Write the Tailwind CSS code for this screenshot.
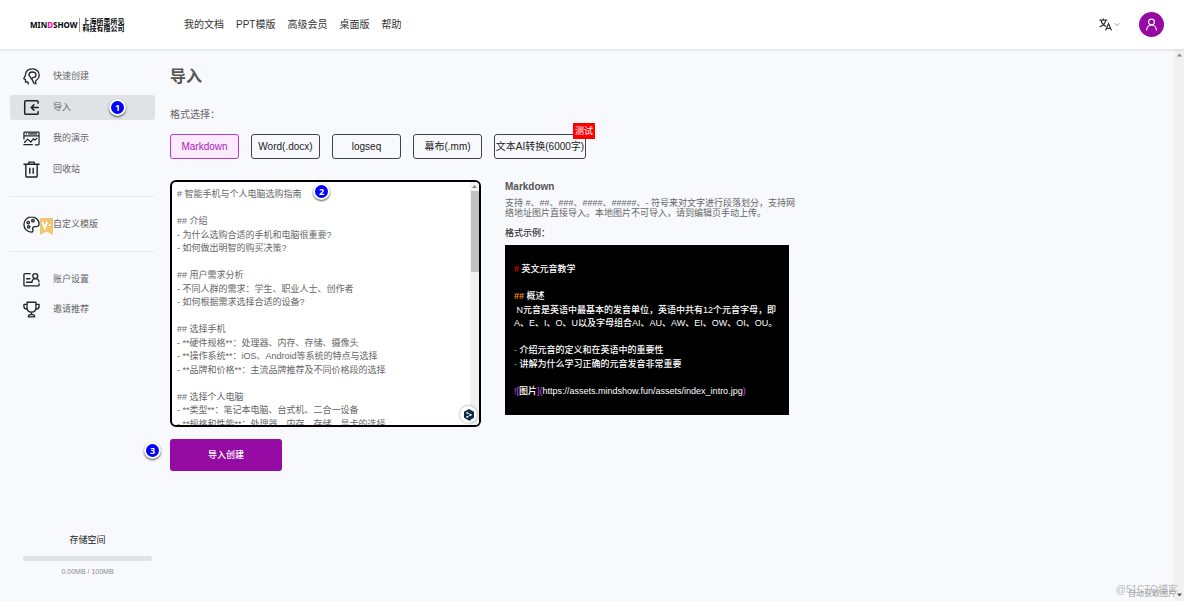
<!DOCTYPE html>
<html lang="zh-CN">
<head>
<meta charset="utf-8">
<meta name="viewport" content="width=device-width, initial-scale=1">
<title>MINDSHOW - 导入</title>
<script src="https://cdn.jsdelivr.net/npm/@tailwindcss/browser@4"></script>
</head>
<body class="relative flex min-h-screen flex-col overflow-x-hidden bg-[#f8f9fd] font-['Liberation_Sans','Noto_Sans_CJK_SC',sans-serif] text-[9px] text-[#666]">

<header class="z-10 flex h-[49px] shrink-0 items-center bg-white pr-5 pl-[30px] shadow-[0_1px_3px_rgba(0,0,0,0.12)]">
  <a href="#" class="flex w-[154px] items-center text-black">
    <span class="font-['Noto_Sans',sans-serif] text-[8px] leading-none font-bold">MIN<span class="text-[#f0a]">D</span>SHOW</span>
    <span class="mr-[3px] ml-px h-[14px] w-px bg-[#999]"></span>
    <span class="text-[7px] leading-[7px] font-bold whitespace-nowrap">上海所思所见<br>科技有限公司</span>
  </a>
  <nav class="flex flex-1 gap-3 text-[10px] whitespace-nowrap text-[#333]">
    <a href="#">我的文档</a>
    <a href="#">PPT模版</a>
    <a href="#">高级会员</a>
    <a href="#">桌面版</a>
    <a href="#">帮助</a>
  </nav>
  <button type="button" aria-label="切换语言" class="mr-[19px] flex items-center gap-[2px]">
    <svg class="h-[13px] w-[13px]" viewBox="0 0 13 13" fill="none" stroke="#333" stroke-width="1.2">
      <path d="M.5 2.200h7.800M4.300.4v1.800M2 2.400c.6 2.700 2.800 5 5 6M6.800 2.400C6.100 5.500 3.500 8 .6 8.800"/>
      <path d="M6.500 12.500l3-7 3 7M7.500 10.400h4"/>
    </svg>
    <svg class="h-[5px] w-[6px]" viewBox="0 0 6 5" fill="none" stroke="#888" stroke-width=".8"><path d="M.6 1.200L3 3.800l2.400-2.600"/></svg>
  </button>
  <button type="button" aria-label="个人账户" class="flex size-[25px] items-center justify-center rounded-full bg-[#940aa2]">
    <svg class="size-[13px]" viewBox="0 0 13 13" fill="none" stroke="#fff" stroke-width="1.100"><circle cx="6.500" cy="4" r="2.900"/><path d="M1.600 12.400c0-3.300 2.200-5.400 4.900-5.400s4.900 2.100 4.900 5.400"/></svg>
  </button>
</header>

<div class="flex flex-1">
  <aside class="flex w-[165px] shrink-0 flex-col pt-[15px] pr-[10px] pb-[23px] pl-[10px]">
    <nav class="flex flex-col">
      <div class="flex flex-col gap-[6px]">
        <a href="#" class="flex h-[25px] items-center gap-[13px] rounded-[3px] pl-[13px]">
          <svg class="size-[17px]" viewBox="0 0 18 18" fill="none" stroke="#222" stroke-width="1.400" stroke-linecap="round" stroke-linejoin="round">
            <path d="M5.500 16.800c.1-1.400-.2-2-1.200-2H2.600v-2.600L.8 11.400 2.400 8.200C2.600 3.500 5.800 1 10 1c4.300 0 7.200 3 7.200 6.700 0 2.300-1.200 3.900-3.100 5.200-1 .8-1.100 2.200-.3 4"/>
            <path d="M6.300 7.500c0-2.200 1.500-3.300 3.600-3.300 2.400 0 3.800 1.200 3.800 3.200 0 1.500-1 2.500-2.400 2.600-1.400 0-1.300 1.400-2.200 1.400-1 0-.7-1.700-1.400-2.100-.8-.4-1.400-.8-1.400-1.800zM9.500 12l2.300 4.500"/>
          </svg>
          <span class="pt-px">快速创建</span>
        </a>
        <a href="#" aria-current="page" class="relative flex h-[25px] items-center gap-[13px] rounded-[3px] bg-[#dfe3e6] pl-[13px]">
          <svg class="size-[17px]" viewBox="0 0 18 18" fill="none" stroke="#222" stroke-width="1.600" stroke-linecap="round" stroke-linejoin="round">
            <path d="M16 4.500V3c0-.8-.4-1.200-1.200-1.200H3C2.200 1.800 1.800 2.200 1.800 3v12c0 .8.400 1.200 1.200 1.200h11.800c.8 0 1.200-.4 1.200-1.200v-1.500M16.200 9H9M11.500 6.200L8.700 9l2.800 2.800"/>
          </svg>
          <span class="pt-px">导入</span>
          <span class="absolute top-[4px] left-[99px] flex size-[17px] items-center justify-center rounded-full border-[2px] border-white bg-[#00f] font-['Noto_Sans',sans-serif] text-[9px] leading-none font-bold text-white shadow-[0_1px_2px_rgba(0,0,0,0.7)]">1</span>
        </a>
        <a href="#" class="flex h-[25px] items-center gap-[13px] rounded-[3px] pl-[13px]">
          <svg class="size-[17px]" viewBox="0 0 18 18" fill="none" stroke="#222" stroke-width="1.300" stroke-linecap="round" stroke-linejoin="round">
            <path d="M1 9.500V3.200c0-.6.300-.9.900-.9h14.200c.6 0 .9.300.9.900v11.600c0 .6-.3.900-.9.900h-3M1 6.200h16M3.500 4.200h.3M6 4.200h8.500M.9 15.600h9M1.500 13.200L5 9.700l3.300 3 2.900-3.500 1.400 1.500 2.200-1.900"/>
          </svg>
          <span class="pt-px">我的演示</span>
        </a>
        <a href="#" class="flex h-[25px] items-center gap-[13px] rounded-[3px] pl-[13px]">
          <svg class="size-[17px]" viewBox="0 0 18 18" fill="none" stroke="#222" stroke-width="1.500" stroke-linecap="round" stroke-linejoin="round">
            <path d="M1 3.500h16M6.200 3.300V1.200h5.600v2.100M3 3.800v12c0 .8.400 1.200 1.200 1.200h9.600c.8 0 1.200-.4 1.200-1.200v-12M7.200 7.500v5.500M10.800 7.500v5.500"/>
          </svg>
          <span class="pt-px">回收站</span>
        </a>
      </div>
      <div class="mt-[14px] border-y border-[#e9ebee] pt-[15px] pb-[14px]">
        <a href="#" class="relative flex h-[25px] items-center gap-[13px] rounded-[3px] pl-[13px]">
          <svg class="size-[17px]" viewBox="0 0 18 18" fill="none" stroke="#222" stroke-width="1.400" stroke-linejoin="round">
            <path d="M9 1C4.500 1 1 4.500 1 9s3.500 8 7.800 8c2 0 2-1.300 1.500-2.600-.6-2 .5-3.200 2.200-3.200 2.900.2 4.600-.9 4.500-3C16.600 4 13.300 1 9 1z"/>
            <circle cx="5.500" cy="7" r="1.300"/><circle cx="10.500" cy="5" r="1.300"/><circle cx="6" cy="11.500" r="1.300"/>
          </svg>
          <span class="pt-px">自定义模版</span>
          <span class="absolute top-[6px] left-[30px] h-[17px] w-[13px]">
            <svg class="h-full w-full" viewBox="0 0 13 17"><path d="M0 0h13v17l-6.500-3.500L0 17z" fill="#efc670"/><path d="M2.300 3.800l2.400 6.200 2.400-6.200" fill="none" stroke="#fff" stroke-width="1.900"/><circle cx="9.800" cy="7" r="1.100" fill="#fff"/></svg>
          </span>
        </a>
      </div>
      <div class="mt-[15px] flex flex-col gap-[5px]">
        <a href="#" class="flex h-[25px] items-center gap-[13px] rounded-[3px] pl-[13px]">
          <svg class="size-[17px]" viewBox="0 0 18 18" fill="none" stroke="#222" stroke-width="1.400" stroke-linecap="round" stroke-linejoin="round">
            <path d="M7.500 2.800H2c-.6 0-1 .4-1 1v11c0 .6.400 1 1 1h14c.6 0 1-.4 1-1v-1.300M3.800 8.200h3.500M3.800 11.900h5.700"/><circle cx="13" cy="5.400" r="2.600"/><path d="M9.500 11.300c.3-2 1.700-3.200 3.500-3.200s3.600 1.300 4 3.200"/>
          </svg>
          <span>账户设置</span>
        </a>
        <a href="#" class="flex h-[25px] items-center gap-[13px] rounded-[3px] pl-[13px]">
          <svg class="size-[17px]" viewBox="0 0 18 18" fill="none" stroke="#222" stroke-width="1.400" stroke-linecap="round" stroke-linejoin="round">
            <path d="M4.300 1.300h9.400v5.900c0 2.800-2 4.600-4.700 4.600S4.300 10 4.300 7.200zM4.200 3.500H1v2.400c0 1.700 1.300 2.800 3.500 2.900M13.800 3.500H17v2.400c0 1.700-1.300 2.800-3.500 2.900M9 11.800v2.400M5.600 16.800c.2-1.600 1-2.400 2-2.400h2.800c1 0 1.800.8 2 2.400z"/>
          </svg>
          <span>邀请推荐</span>
        </a>
      </div>
    </nav>
    <section class="mt-auto flex flex-col items-center pr-[3px] pl-[13px]">
      <h2 class="leading-[14px] text-[#222]">存储空间</h2>
      <div role="progressbar" aria-label="存储空间" aria-valuenow="0" aria-valuemin="0" aria-valuemax="100" class="mt-[9px] h-[5px] w-full rounded-full bg-[#e1e2e3]"></div>
      <p class="mt-[5px] text-[7px] leading-[12px] text-[#888]">0.00MB / 100MB</p>
    </section>
  </aside>

  <main class="min-w-0 flex-1 pt-[16px] pl-[5px]">
    <h1 class="text-[16px] leading-[24px] font-bold text-[#555]">导入</h1>
    <p class="mt-[18px] text-[10px] leading-[16px]">格式选择：</p>
    <div class="mt-[11px] flex gap-3 text-[10px] whitespace-nowrap text-[#222]">
      <button type="button" class="h-[25px] w-[69px] rounded-[3px] border border-[#b23bc0] bg-[#fdeafe] text-[#a51fb5]">Markdown</button>
      <button type="button" class="h-[25px] w-[69px] rounded-[3px] border border-[#444]">Word(.docx)</button>
      <button type="button" class="h-[25px] w-[69px] rounded-[3px] border border-[#444]">logseq</button>
      <button type="button" class="h-[25px] w-[69px] rounded-[3px] border border-[#444]">幕布(.mm)</button>
      <button type="button" class="relative flex h-[25px] w-[92px] items-center justify-center rounded-[3px] border border-[#444]">文本AI转换(6000字)
        <span class="absolute -top-[12px] -right-[10px] flex h-[16px] w-[22px] items-center justify-center bg-[#f00] text-[9px] leading-none text-white">测试</span>
      </button>
    </div>

    <div class="mt-[21px] flex items-start gap-6">
      <div class="relative h-[247px] w-[311px] shrink-0 overflow-hidden rounded-[6px] border-2 border-black bg-white">
        <textarea aria-label="Markdown 内容" class="block h-full w-[298px] resize-none overflow-hidden pt-[6px] pl-[5px] text-[9px] leading-normal whitespace-pre text-[#666] outline-none"># 智能手机与个人电脑选购指南

## 介绍
- 为什么选购合适的手机和电脑很重要?
- 如何做出明智的购买决策?

## 用户需求分析
- 不同人群的需求：学生、职业人士、创作者
- 如何根据需求选择合适的设备?

## 选择手机
- **硬件规格**：处理器、内存、存储、摄像头
- **操作系统**：iOS、Android等系统的特点与选择
- **品牌和价格**：主流品牌推荐及不同价格段的选择

## 选择个人电脑
- **类型**：笔记本电脑、台式机、二合一设备
- **规格和性能**：处理器、内存、存储、显卡的选择</textarea>
        <div class="absolute inset-y-0 right-0 flex w-[9px] flex-col items-center bg-[#f1f1f1]">
          <svg class="h-[9px] w-[5px] shrink-0" viewBox="0 0 5 9"><path d="M0 6l2.500-3L5 6z" fill="#888"/></svg>
          <div class="h-[81px] w-[8px] bg-[#c1c1c1]"></div>
        </div>
        <span class="absolute top-[1px] left-[141px] flex size-[17px] items-center justify-center rounded-full border-[2px] border-white bg-[#00f] font-['Noto_Sans',sans-serif] text-[9px] leading-none font-bold text-white shadow-[0_1px_2px_rgba(0,0,0,0.7)]">2</span>
        <button type="button" aria-label="翻译" class="absolute right-[2px] bottom-[2px] flex size-[17px] items-center justify-center rounded-full bg-white shadow-[0_0_3px_rgba(0,0,0,0.4)]">
          <svg class="size-[12px]" viewBox="0 0 12 12"><path d="M6 0l5 2.800v5.900L7.500 10.700V12L5.500 11.200 1 8.700V2.800z" fill="#0f2b46"/><path d="M4.300 3.800l3.600 2-3.600 2.100" fill="none" stroke="#fff" stroke-width=".8"/><circle cx="4.200" cy="3.800" r=".9" fill="#fff"/><circle cx="7.900" cy="5.800" r=".9" fill="#fff"/><circle cx="4.200" cy="7.900" r=".9" fill="#fff"/></svg>
        </button>
      </div>

      <section class="w-[284px] whitespace-nowrap">
        <h2 class="text-[10px] leading-[14px] font-bold text-[#555]">Markdown</h2>
        <p class="mt-[4px] leading-[10px]">支持 #、##、###、####、#####、- 符号来对文字进行段落划分，支持网<br>络地址图片直接导入。本地图片不可导入，请到编辑页手动上传。</p>
        <h3 class="mt-[8px] leading-[14px] font-medium text-[#333]">格式示例：</h3>
        <pre class="mt-[5px] bg-black pt-[18px] pb-[17px] pl-[9px] font-['Liberation_Sans','Noto_Sans_CJK_SC',sans-serif] text-[9px] leading-normal font-medium text-white"><span class="font-bold text-[#d00]">#</span> 英文元音教学

<span class="font-bold text-[#f80]">##</span> 概述
 N元音是英语中最基本的发音单位，英语中共有12个元音字母，即
A、E、I、O、U以及字母组合AI、AU、AW、EI、OW、OI、OU。

<span class="text-[#4c4]">-</span> 介绍元音的定义和在英语中的重要性
<span class="text-[#4c4]">-</span> 讲解为什么学习正确的元音发音非常重要

<span class="text-[#d4e]">![</span>图片<span class="text-[#d4e]">](</span>https://assets.mindshow.fun/assets/index_intro.jpg<span class="text-[#d4e]">)</span></pre>
      </section>
    </div>

    <div class="relative mt-3 w-[112px]">
      <button type="button" class="h-[32px] w-full rounded-[3px] bg-[#940aa2] pt-px text-[9px] font-medium text-white">导入创建</button>
      <span class="absolute top-[3px] -left-[26px] flex size-[17px] items-center justify-center rounded-full border-[2px] border-white bg-[#00f] font-['Noto_Sans',sans-serif] text-[9px] leading-none font-bold text-white shadow-[0_1px_2px_rgba(0,0,0,0.7)]">3</span>
    </div>
  </main>

  <div class="flex w-[10px] shrink-0 flex-col items-center justify-between bg-[#f1f1f1] py-[4px]">
    <svg class="h-[4px] w-[5px]" viewBox="0 0 5 4"><path d="M0 3.500l2.500-3 2.500 3z" fill="#888"/></svg>
    <svg class="h-[4px] w-[5px]" viewBox="0 0 5 4"><path d="M0 .5l2.500 3L5 .5z" fill="#555"/></svg>
  </div>
</div>

<span class="absolute right-[6px] bottom-[4px] text-[10px] leading-[14px] text-[#bbb]">@51CTO博客</span>
<span class="absolute right-[8px] bottom-px text-[8px] leading-[12px] text-[#999]">自动获取图片</span>
</body>
</html>
